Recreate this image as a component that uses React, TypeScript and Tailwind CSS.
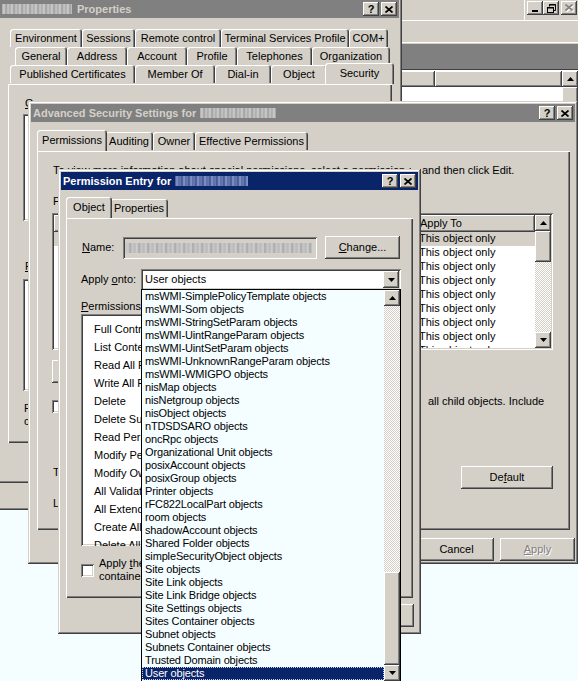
import React from "react";

const raised =
  "shadow-[inset_-1px_-1px_0_#404040,inset_1px_1px_0_#ffffff,inset_-2px_-2px_0_#808080,inset_2px_2px_0_#d4d0c8]";
const sunken =
  "shadow-[inset_1px_1px_0_#808080,inset_-1px_-1px_0_#ffffff,inset_2px_2px_0_#404040,inset_-2px_-2px_0_#d4d0c8]";
const frame =
  "shadow-[inset_-1px_-1px_0_#404040,inset_1px_1px_0_#d4d0c8,inset_-2px_-2px_0_#808080,inset_2px_2px_0_#ffffff]";
const panel =
  "shadow-[inset_1px_1px_0_#ffffff,inset_-1px_-1px_0_#404040,inset_-2px_-2px_0_#808080]";
const tabSh =
  "shadow-[inset_1px_1px_0_#ffffff,inset_-1px_0_0_#404040,inset_-2px_0_0_#808080]";
const dither =
  "bg-[image:repeating-conic-gradient(#ffffff_0%_25%,#d4d0c8_0%_50%)] bg-[length:2px_2px]";

function XGlyph({ color = "#000000" }: { color?: string }) {
  return (
    <svg width="8" height="7" viewBox="0 0 8 7">
      <path d="M0.5 0.5L7.5 6.5M7.5 0.5L0.5 6.5" stroke={color} strokeWidth="1.7" />
    </svg>
  );
}

function Arrow({ up }: { up?: boolean }) {
  return (
    <svg width="7" height="4" viewBox="0 0 7 4">
      {up ? <path d="M3.5 0L7 4H0z" fill="#000" /> : <path d="M0 0H7L3.5 4z" fill="#000" />}
    </svg>
  );
}

function TBtn({ children }: { children: React.ReactNode }) {
  return (
    <div
      className={`w-[16px] h-[14px] shrink-0 bg-[#d4d0c8] ${raised} flex items-center justify-center text-black font-bold text-[11px] leading-none`}
    >
      {children}
    </div>
  );
}

function Blur({ tone, w }: { tone: "navy" | "gray" | "field"; w: string }) {
  const cls =
    tone === "navy"
      ? "bg-[image:repeating-linear-gradient(90deg,#3a4f8f_0px,#8d9dce_2px,#4d619d_4px,#7486bd_5px,#3a4f8f_7px)]"
      : tone === "gray"
      ? "bg-[image:repeating-linear-gradient(90deg,#a9a9a9_0px,#d0d0d0_2px,#9c9c9c_4px,#c6c6c6_6px,#a9a9a9_8px)]"
      : "bg-[image:repeating-linear-gradient(90deg,#b9b9b9_0px,#d2d2d2_2px,#a6a6a6_4px,#c8c8c8_6px,#b9b9b9_9px)]";
  return <span className={`inline-block ${w} h-[10px] ${cls} blur-[0.6px]`} />;
}

function TitleBar({
  active,
  title,
  blurW,
  nameFirst,
}: {
  active?: boolean;
  title: string;
  blurW: string;
  nameFirst?: boolean;
}) {
  return (
    <div
      className={`h-[18px] shrink-0 flex items-center pl-[2px] ${
        active ? "bg-[#0a246a] text-white" : "bg-[#808080] text-[#d4d0c8]"
      }`}
    >
      {nameFirst ? (
        <>
          <Blur tone="gray" w={blurW} />
          <span className="font-bold whitespace-nowrap ml-[5px] text-[11px]">{title}</span>
        </>
      ) : (
        <>
          <span className="font-bold whitespace-nowrap text-[11px]">{title}</span>
          <span className="ml-[4px] flex items-center">
            <Blur tone={active ? "navy" : "gray"} w={blurW} />
          </span>
        </>
      )}
      <div className="ml-auto flex gap-[2px] pr-[2px]">
        <TBtn>?</TBtn>
        <TBtn>
          <XGlyph />
        </TBtn>
      </div>
    </div>
  );
}

type TabDef = { label: string; w: string; sel?: boolean };

function Tab({ label, w, sel }: TabDef) {
  if (sel)
    return (
      <div
        className={`relative z-10 -mx-[2px] -mt-[2px] h-[21px] ${w} shrink-0 bg-[#d4d0c8] ${tabSh} rounded-t-[3px] pt-[4px] text-center whitespace-nowrap`}
      >
        {label}
      </div>
    );
  return (
    <div
      className={`h-[18px] ${w} shrink-0 bg-[#d4d0c8] ${tabSh} rounded-t-[3px] pt-[3px] text-center whitespace-nowrap`}
    >
      {label}
    </div>
  );
}

function Button({
  children,
  w = "w-[75px]",
  disabled,
}: {
  children: React.ReactNode;
  w?: string;
  disabled?: boolean;
}) {
  return (
    <div
      className={`${w} h-[23px] shrink-0 bg-[#d4d0c8] ${raised} flex items-center justify-center whitespace-nowrap ${
        disabled ? "text-[#808080] [text-shadow:1px_1px_0_#ffffff]" : ""
      }`}
    >
      {children}
    </div>
  );
}

function Check() {
  return <div className={`w-[13px] h-[13px] shrink-0 bg-white ${sunken}`} />;
}

function MmcWindow() {
  return (
    <div className="absolute left-0 top-0 w-[578px] h-[510px] bg-[#d4d0c8] flex flex-col shadow-[inset_0_-1px_0_#404040,inset_0_-2px_0_#808080]">
      <div className="h-[21px] shrink-0 flex border-b border-white">
        <div className="w-[524px]" />
        <div className="w-[1px] bg-white" />
        <div className="flex pt-[1px] pl-[2px]">
          <TBtn>
            <div className="w-[6px] h-[2px] bg-black mt-[6px]" />
          </TBtn>
          <TBtn>
            <svg width="9" height="9" viewBox="0 0 9 9">
              <path d="M2.5 0.5H8.5V6.5H6.5M2.5 0.5V2.5" stroke="#000" fill="none" />
              <path d="M2 1H9" stroke="#000" strokeWidth="1" />
              <rect x="0.5" y="3.5" width="6" height="5" stroke="#000" fill="none" />
              <path d="M0 4H7" stroke="#000" />
            </svg>
          </TBtn>
          <div className="w-[2px]" />
          <TBtn>
            <div className="relative w-[9px] h-[8px]">
              <div className="absolute left-[1px] top-[1px]">
                <XGlyph color="#ffffff" />
              </div>
              <div className="absolute left-0 top-0">
                <XGlyph color="#808080" />
              </div>
            </div>
          </TBtn>
        </div>
      </div>
      <div className="h-[22px] shrink-0 border-b border-white" />
      <div className="h-[2px] shrink-0 border-b border-[#808080]" />
      <div className="h-[24px] shrink-0 bg-[#808080]" />
      <div className="h-[2px] shrink-0 border-t border-[#404040] border-b border-b-white" />
      <div className="h-[16px] shrink-0 flex">
        <div className="w-[435px] shadow-[inset_-1px_-1px_0_#404040,inset_1px_1px_0_#ffffff,inset_-2px_-2px_0_#808080]" />
        <div className="flex-1 shadow-[inset_-1px_-1px_0_#404040,inset_1px_1px_0_#ffffff,inset_-2px_-2px_0_#808080]" />
        <div className={`w-[16px] ${raised} flex items-center justify-center`}>
          <Arrow up />
        </div>
      </div>
      <div className="flex-1 flex border-b border-[#808080]">
        <div className="flex-1 bg-white" />
        <div className={`w-[16px] ${raised}`} />
      </div>
      <div className="h-[27px] shrink-0" />
    </div>
  );
}

function PropertiesWindow() {
  const row1: TabDef[] = [
    { label: "Environment", w: "w-[72px]" },
    { label: "Sessions", w: "w-[53px]" },
    { label: "Remote control", w: "w-[86px]" },
    { label: "Terminal Services Profile", w: "w-[128px]" },
    { label: "COM+", w: "w-[39px]" },
  ];
  const row2: TabDef[] = [
    { label: "General", w: "w-[52px]" },
    { label: "Address", w: "w-[60px]" },
    { label: "Account", w: "w-[60px]" },
    { label: "Profile", w: "w-[50px]" },
    { label: "Telephones", w: "w-[75px]" },
    { label: "Organization", w: "w-[78px]" },
  ];
  const row3: TabDef[] = [
    { label: "Published Certificates", w: "w-[125px]" },
    { label: "Member Of", w: "w-[80px]" },
    { label: "Dial-in", w: "w-[56px]" },
    { label: "Object", w: "w-[56px]" },
    { label: "Security", w: "w-[69px]", sel: true },
  ];
  return (
    <div
      className={`absolute left-[-3px] top-[-3px] w-[405px] h-[486px] bg-[#d4d0c8] ${frame} p-[3px] flex flex-col`}
    >
      <TitleBar title="Properties" blurW="w-[70px]" nameFirst />
      <div className="pl-[8px] pt-[11px]">
        <div className="flex pl-[2px]">
          {row1.map((t) => (
            <Tab key={t.label} {...t} />
          ))}
        </div>
        <div className="flex pl-[7px]">
          {row2.map((t) => (
            <Tab key={t.label} {...t} />
          ))}
        </div>
        <div className="flex pl-[2px]">
          {row3.map((t) => (
            <Tab key={t.label} {...t} />
          ))}
        </div>
        <div className={`w-[384px] h-[359px] ${panel} pl-[15px] pt-[13px] flex flex-col`}>
          <div className="ml-[2px] h-[13px] whitespace-nowrap">
            <span className="underline">G</span>roup or user names:
          </div>
          <div className={`mt-[4px] w-[353px] h-[107px] bg-white ${sunken}`} />
          <div className="mt-[6px] w-[353px] flex justify-end gap-[6px]">
            <Button>Add...</Button>
            <Button>Remove</Button>
          </div>
          <div className="mt-[10px] ml-[2px] h-[13px] whitespace-nowrap">
            <span className="underline">P</span>ermissions for Administrators
          </div>
          <div className={`mt-[6px] w-[353px] h-[112px] bg-white ${sunken}`} />
          <div className="mt-[11px] ml-[1px] leading-[13px]">
            <div>For special permissions or for advanced settings,</div>
            <div>click Advanced.</div>
          </div>
        </div>
        <div className="mt-[8px] w-[384px] flex justify-end gap-[6px]">
          <Button>OK</Button>
          <Button>Cancel</Button>
          <Button disabled>Apply</Button>
        </div>
      </div>
    </div>
  );
}

function AdvancedWindow() {
  const tabs: TabDef[] = [
    { label: "Permissions", w: "w-[70px]", sel: true },
    { label: "Auditing", w: "w-[48px]" },
    { label: "Owner", w: "w-[42px]" },
    { label: "Effective Permissions", w: "w-[113px]" },
  ];
  return (
    <div
      className={`absolute left-[28px] top-[101px] w-[550px] h-[463px] bg-[#d4d0c8] ${frame} p-[3px] flex flex-col`}
    >
      <TitleBar title="Advanced Security Settings for" blurW="w-[76px]" />
      <div className="pl-[6px] pt-[10px]">
        <div className="flex pl-[2px]">
          {tabs.map((t) => (
            <Tab key={t.label} {...t} />
          ))}
        </div>
        <div className={`w-[533px] h-[379px] ${panel} pl-[15px] pt-[13px] flex flex-col`}>
          <div className="ml-[1px] h-[13px] flex whitespace-nowrap">
            <span className="w-[369px] shrink-0">
              <span className="block w-[358px] overflow-hidden">
                To view more information about special permissions, select a permission entry,
              </span>
            </span>
            <span>and then click Edit.</span>
          </div>
          <div className="mt-[18px] ml-[1px] h-[13px] whitespace-nowrap">Permission entries:</div>
          <div className={`mt-[5px] w-[501px] h-[137px] bg-white ${sunken} p-[2px] flex`}>
            <div className="flex-1 flex flex-col overflow-hidden">
              <div className="h-[17px] shrink-0 flex shadow-[inset_-1px_-1px_0_#404040,inset_1px_1px_0_#ffffff,inset_-2px_-2px_0_#808080] bg-[#d4d0c8] pl-[366px] pt-[2px] whitespace-nowrap">
                Apply To
              </div>
              <div className="h-[14px] shrink-0 bg-[#d4d0c8] pl-[365px] whitespace-nowrap">This object only</div>
              {Array.from({ length: 8 }).map((_, i) => (
                <div key={i} className="h-[14px] shrink-0 pl-[365px] whitespace-nowrap">
                  This object only
                </div>
              ))}
            </div>
            <div className="w-[16px] flex flex-col">
              <div className={`h-[16px] shrink-0 bg-[#d4d0c8] ${raised} flex items-center justify-center`}>
                <Arrow up />
              </div>
              <div className={`h-[31px] shrink-0 bg-[#d4d0c8] ${raised}`} />
              <div className={`flex-1 ${dither}`} />
              <div className={`h-[16px] shrink-0 bg-[#d4d0c8] ${raised} flex items-center justify-center`}>
                <Arrow />
              </div>
            </div>
          </div>
          <div className="mt-[10px] flex gap-[6px]">
            <Button>Add...</Button>
            <Button>Edit...</Button>
            <Button>Remove</Button>
          </div>
          <div className="mt-[12px] flex gap-[5px]">
            <div className="mt-[5px]">
              <Check />
            </div>
            <div className="leading-[13px]">
              <div className="flex whitespace-nowrap">
                <span className="w-[358px] shrink-0">
                  <span className="block w-[340px] overflow-hidden">
                    Allow inheritable permissions from the parent to propagate to this object and
                  </span>
                </span>
                <span>all child objects. Include</span>
              </div>
              <div className="w-[340px] overflow-hidden whitespace-nowrap">
                these with entries explicitly defined here.
              </div>
            </div>
          </div>
          <div className="mt-[45px] flex w-[501px] justify-between">
            <div className="ml-[1px] w-[340px] overflow-hidden whitespace-nowrap">
              To reset permissions to the default, click Default.
            </div>
            <Button w="w-[92px]">
              De<span className="underline">f</span>ault
            </Button>
          </div>
          <div className="mt-[8px] ml-[1px] whitespace-nowrap">Learn more about special permissions.</div>
        </div>
        <div className="mt-[8px] w-[538px] flex justify-end gap-[6px]">
          <Button>OK</Button>
          <Button>Cancel</Button>
          <Button disabled>
            <span className="underline">A</span>pply
          </Button>
        </div>
      </div>
    </div>
  );
}

function PermissionEntryWindow() {
  const tabs: TabDef[] = [
    { label: "Object", w: "w-[46px]", sel: true },
    { label: "Properties", w: "w-[58px]" },
  ];
  const perms = [
    "Full Control",
    "List Contents",
    "Read All Properties",
    "Write All Properties",
    "Delete",
    "Delete Subtree",
    "Read Permissions",
    "Modify Permissions",
    "Modify Owner",
    "All Validated Writes",
    "All Extended Rights",
    "Create All Child Objects",
    "Delete All Child Objects",
  ];
  return (
    <div
      className={`absolute left-[58px] top-[169px] w-[363px] h-[465px] bg-[#d4d0c8] ${frame} p-[3px] flex flex-col`}
    >
      <TitleBar active title="Permission Entry for" blurW="w-[73px]" />
      <div className="pl-[5px] pt-[9px]">
        <div className="flex pl-[2px]">
          {tabs.map((t) => (
            <Tab key={t.label} {...t} />
          ))}
        </div>
        <div className={`w-[347px] h-[380px] ${panel} pl-[15px] pt-[18px] flex flex-col`}>
          <div className="flex items-center h-[23px]">
            <div className="w-[42px] pl-[1px]">
              <span className="underline">N</span>ame:
            </div>
            <div className={`w-[194px] h-[22px] ${sunken} bg-[#d4d0c8] p-[3px] flex items-center`}>
              <Blur tone="field" w="w-[186px]" />
            </div>
            <div className="ml-[8px]">
              <Button>
                <span className="underline">C</span>hange...
              </Button>
            </div>
          </div>
          <div className="mt-[10px] flex items-center h-[21px]">
            <div className="w-[60px] whitespace-nowrap">
              Apply <span className="underline">o</span>nto:
            </div>
            <div className={`w-[260px] h-[21px] ${sunken} bg-white flex items-center pl-[4px] pr-[2px]`}>
              <span className="flex-1">User objects</span>
              <div className={`w-[16px] h-[17px] bg-[#d4d0c8] ${raised} flex items-center justify-center`}>
                <Arrow />
              </div>
            </div>
          </div>
          <div className="mt-[10px] h-[13px]">
            <span className="underline">P</span>ermissions:
          </div>
          <div className={`mt-[1px] w-[319px] h-[232px] bg-white ${sunken} pt-[6px] pl-[13px] overflow-hidden`}>
            {perms.map((p) => (
              <div key={p} className="h-[18px] leading-[18px] whitespace-nowrap">
                {p}
              </div>
            ))}
          </div>
          <div className="mt-[11px] flex items-center gap-[5px]">
            <Check />
            <div className="leading-[13px]">
              <div>
                Apply <span className="underline">t</span>hese permissions to objects and/or
              </div>
              <div>containers within this container only</div>
            </div>
          </div>
        </div>
        <div className="mt-[6px] w-[348px] flex justify-end gap-[6px]">
          <Button>OK</Button>
          <Button>Cancel</Button>
        </div>
      </div>
    </div>
  );
}

function DropdownList() {
  const items = [
    "msWMI-SimplePolicyTemplate objects",
    "msWMI-Som objects",
    "msWMI-StringSetParam objects",
    "msWMI-UintRangeParam objects",
    "msWMI-UintSetParam objects",
    "msWMI-UnknownRangeParam objects",
    "msWMI-WMIGPO objects",
    "nisMap objects",
    "nisNetgroup objects",
    "nisObject objects",
    "nTDSDSARO objects",
    "oncRpc objects",
    "Organizational Unit objects",
    "posixAccount objects",
    "posixGroup objects",
    "Printer objects",
    "rFC822LocalPart objects",
    "room objects",
    "shadowAccount objects",
    "Shared Folder objects",
    "simpleSecurityObject objects",
    "Site objects",
    "Site Link objects",
    "Site Link Bridge objects",
    "Site Settings objects",
    "Sites Container objects",
    "Subnet objects",
    "Subnets Container objects",
    "Trusted Domain objects",
    "User objects",
  ];
  return (
    <div className="absolute left-[141px] top-[289px] w-[260px] h-[394px] border border-black bg-[#f4fdff] flex tracking-[-0.15px]">
      <div className="flex-1 flex flex-col">
        {items.map((it, i) =>
          i === items.length - 1 ? (
            <div
              key={it}
              className="h-[13px] leading-[13px] bg-[#0a246a] text-white pl-[3px] outline outline-1 outline-dotted outline-[#c8d0e8] -outline-offset-1 whitespace-nowrap"
            >
              {it}
            </div>
          ) : (
            <div key={it} className="h-[13px] leading-[13px] pl-[3px] whitespace-nowrap">
              {it}
            </div>
          )
        )}
      </div>
      <div className="w-[16px] flex flex-col">
        <div className={`h-[16px] shrink-0 bg-[#d4d0c8] ${raised} flex items-center justify-center`}>
          <Arrow up />
        </div>
        <div className={`h-[266px] shrink-0 ${dither}`} />
        <div className={`h-[93px] shrink-0 bg-[#d4d0c8] ${raised}`} />
        <div className={`h-[16px] shrink-0 bg-[#d4d0c8] ${raised} flex items-center justify-center`}>
          <Arrow />
        </div>
      </div>
    </div>
  );
}

export default function App() {
  return (
    <div className="relative w-[578px] h-[681px] overflow-hidden bg-[#f4fdff] font-['Liberation_Sans',Arial,sans-serif] text-[11px] leading-[13px] text-black">
      <MmcWindow />
      <PropertiesWindow />
      <AdvancedWindow />
      <PermissionEntryWindow />
      <DropdownList />
    </div>
  );
}
